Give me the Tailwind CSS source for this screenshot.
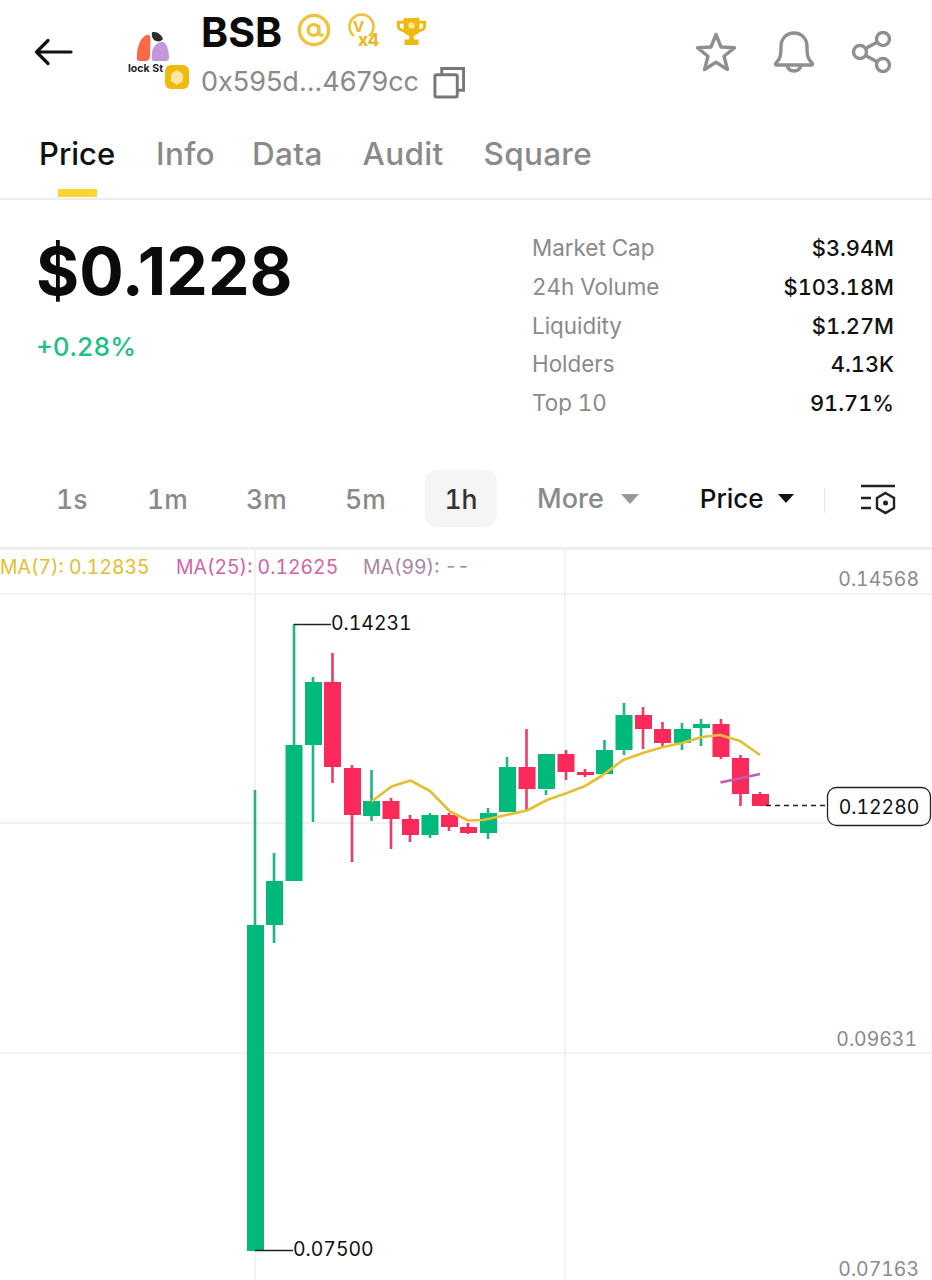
<!DOCTYPE html>
<html lang="en">
<head>
    <meta charset="UTF-8">
    <meta name="viewport" content="width=device-width, initial-scale=1.0">
    <title>BSB Price</title>
    <script src="https://cdn.jsdelivr.net/npm/@tailwindcss/browser@4"></script>
</head>
<body class="bg-white font-['Inter',sans-serif] tabular-nums">
    <div class="w-[932px] h-[1280px] overflow-hidden">

        <!-- Header -->
        <div class="h-[122px] flex items-start">
            <svg class="ml-[34px] mt-[37px] w-[40px] h-[30px]" viewBox="0 0 40 30" fill="none" stroke="#111" stroke-width="3.2" stroke-linecap="round" stroke-linejoin="round">
                <path d="M37 15H3M14 3.5 2.5 15 14 26.5"/>
            </svg>
            <svg class="ml-[52px] mt-[30px] w-[66px] h-[62px]" viewBox="0 0 66 62">
                <path d="M14 12C17 6 22 3 24 6C25 11 24 18 24 24C24 29 23 31 19 31H13C11 31 10.500 29 11 25C11 20 12 16 14 12Z" fill="#fb6a45"/>
                <path d="M26 22C27 17 31 11 37 12C41 13 43 22 43 27C43 30 42 31 38 31H28C26 31 25.500 29 26 22Z" fill="#c497dc"/>
                <path d="M26 2.500C30 1 35 4 37 9C35 12 31 12 28 10C26 8 25.500 5 26 2.500Z" fill="#2c2c2c"/>
                <text x="2" y="42" font-size="10.500" font-weight="700" fill="#222" font-family="Inter">lock St</text>
                <rect x="39" y="35" width="24" height="24" rx="6" fill="#f0b90b"/>
                <path d="M51 40 57 44V51L51 55 45 51V44Z" fill="#fbe6a0"/>
            </svg>
            <div class="ml-[9px] pt-[10px]">
                <div class="flex items-start h-[44px]">
                    <span class="text-[41px] font-bold leading-[44px] text-[#0b0b0b] w-[82px]">BSB</span>
                    <svg class="ml-[14px] mt-[3px] w-[34px] h-[34px]" viewBox="0 0 35 35" fill="none" stroke="#f0c23a" stroke-width="3.4">
                        <circle cx="17.5" cy="17.5" r="15"/>
                        <circle cx="17" cy="17.5" r="5.5"/>
                        <path d="M22.5 12V20C22.5 23 25 23.5 27 22"/>
                    </svg>
                    <svg class="ml-[15px] mt-[3px] w-[36px] h-[38px]" viewBox="0 0 36 38" fill="none">
                        <path d="M23 23A12 12 0 1 0 8 23" stroke="#f0c23a" stroke-width="2.600"/>
                        <text x="7" y="19" font-size="15" font-weight="700" fill="#e9b92c" font-family="Inter">V</text>
                        <text x="12" y="33" font-size="17" font-weight="800" fill="#e9b92c" font-family="Inter">x4</text>
                    </svg>
                    <svg class="ml-[14px] mt-[7px] w-[31px] h-[29px]" viewBox="0 0 33 31">
                        <path d="M8 1H25V4H32V10C32 14 28 16 25 16C23.5 18.5 21 19.5 19 20V24H24V30H9V24H14V20C12 19.5 9.5 18.5 8 16C5 16 1 14 1 10V4H8ZM8 7H4V10C4 12 6 13 8 13ZM25 7V13C27 13 29 12 29 10V7Z" fill="#f0b90b" fill-rule="evenodd"/>
                        <circle cx="16.5" cy="9" r="3.4" fill="#fbe6a0"/>
                    </svg>
                </div>
                <div class="flex items-center mt-[10px]">
                    <span class="text-[27px] leading-[36px] text-[#8a8a8a] normal-nums">0x595d...4679cc</span>
                    <svg class="ml-[14px] w-[33px] h-[33px]" viewBox="0 0 34 34" fill="none" stroke="#777" stroke-width="3">
                        <rect x="2" y="9" width="23" height="23" rx="1.5"/>
                        <path d="M9 9V2.5H31.5V25H25"/>
                    </svg>
                </div>
            </div>
            <div class="ml-auto mr-[39px] mt-[30px] flex items-center gap-[36px]">
                <svg class="w-[42px] h-[42px]" viewBox="0 0 42 42" fill="none" stroke="#8f8f8f" stroke-width="3.4" stroke-linejoin="round">
                    <path d="M21 3.5 26 16 39.5 16.8 29 25.3 32.5 38.5 21 31.2 9.5 38.5 13 25.3 2.5 16.8 16 16Z"/>
                </svg>
                <svg class="w-[42px] h-[44px]" viewBox="0 0 42 44" fill="none" stroke="#8f8f8f" stroke-width="3.4" stroke-linejoin="round">
                    <path d="M3 33C7 29 8 26 8 17C8 8 14 3 21 3C28 3 34 8 34 17C34 26 35 29 39 33C40 34 39.500 35 38 35H4C2.500 35 2 34 3 33Z"/>
                    <path d="M14 35.500C15 39 18 41 21 41C24 41 27 39 28 35.500"/>
                </svg>
                <svg class="w-[42px] h-[42px]" viewBox="0 0 42 42" fill="none" stroke="#8f8f8f" stroke-width="3.4">
                    <circle cx="9" cy="21" r="6.500"/>
                    <circle cx="32" cy="8" r="6.500"/>
                    <circle cx="32" cy="34" r="6.500"/>
                    <path d="M14.500 17.500 26.500 11M14.500 24.500 26.500 31"/>
                </svg>
            </div>
        </div>

        <!-- Tabs -->
        <div class="h-[78px] border-b-2 border-[#ececec] flex pl-[39px] gap-[40px] text-[31.5px] leading-[64px] tracking-[0.3px] text-[#8a8a8a] font-medium">
            <div class="relative w-[77px] text-[31px] tracking-normal text-[#111]">Price
                <div class="absolute left-[19px] top-[67px] w-[39px] h-[8px] bg-[#fcd535]"></div>
            </div>
            <div class="w-[56px]">Info</div>
            <div>Data</div>
            <div>Audit</div>
            <div>Square</div>
        </div>

        <!-- Price and stats -->
        <div class="h-[268px] flex justify-between pl-[36px] pr-[38px]">
            <div>
                <div class="text-[66px] leading-[70px] font-bold text-[#0b0b0b] mt-[36px] normal-nums">$0.1228</div>
                <div class="text-[26px] leading-[32px] font-medium text-[#1fbf8b] mt-[25px]">+0.28%</div>
            </div>
            <div class="w-[362px] mt-[29px] text-[22.4px] leading-[38.8px]">
                <div class="flex justify-between"><span class="text-[#8a8a8a]">Market Cap</span><span class="text-[21.8px] font-medium text-[#111]">$3.94M</span></div>
                <div class="flex justify-between"><span class="text-[#8a8a8a]">24h Volume</span><span class="text-[21.8px] font-medium text-[#111]">$103.18M</span></div>
                <div class="flex justify-between"><span class="text-[#8a8a8a]">Liquidity</span><span class="text-[21.8px] font-medium text-[#111]">$1.27M</span></div>
                <div class="flex justify-between"><span class="text-[#8a8a8a]">Holders</span><span class="text-[21.8px] font-medium text-[#111]">4.13K</span></div>
                <div class="flex justify-between"><span class="text-[#8a8a8a]">Top 10</span><span class="text-[21.8px] font-medium text-[#111]">91.71%</span></div>
            </div>
        </div>

        <!-- Interval bar -->
        <div class="h-[82px] pt-[2px] border-b-[3px] border-[#efefef] flex items-start text-[26.5px] font-medium text-[#8a8a8a]">
            <div class="ml-[56px] w-[91px] leading-[58px]">1s</div>
            <div class="w-[99px] leading-[58px]">1m</div>
            <div class="w-[99px] leading-[58px]">3m</div>
            <div class="w-[80px] leading-[58px]">5m</div>
            <div class="w-[72px] h-[57px] bg-[#f5f5f5] rounded-xl text-center leading-[58px] text-[#333]">1h</div>
            <div class="ml-[40px] text-[27px] leading-[58px]">More</div>
            <div class="ml-[17px] mt-[24px] w-0 h-0 border-x-[9px] border-x-transparent border-t-[10px] border-t-[#999]"></div>
            <div class="ml-[61px] w-[64px] text-[26px] leading-[58px] text-[#111]">Price</div>
            <div class="ml-[14px] mt-[24px] w-0 h-0 border-x-[8px] border-x-transparent border-t-[9px] border-t-[#111]"></div>
            <div class="ml-[30px] mt-[18px] w-[1px] h-[25px] bg-[#e6e6e6]"></div>
            <svg class="ml-[35px] mt-[14px] w-[36px] h-[32px]" viewBox="0 0 36 32" fill="none" stroke="#222" stroke-width="2.400">
                <path d="M1 2H35M1 14H11M1 24H11"/>
                <path d="M25.500 9 34 14V24L25.500 29 17 24V14Z"/>
                <circle cx="25.500" cy="19" r="2.500" fill="#222" stroke="none"/>
            </svg>
        </div>

        <!-- Chart -->
        <svg class="block w-[932px] h-[730px]" viewBox="0 550 932 730" font-family="Inter">
            <g stroke="#eeeeee" stroke-width="1.500">
                <path d="M0 594H932M0 823H932M0 1053H932M255 550V1280M565 550V1280"/>
            </g>
            <g font-size="19.400">
                <text x="0" y="574" fill="#e6bd2c">MA(7): 0.12835</text>
                <text x="176" y="574" fill="#d65fae">MA(25): 0.12625</text>
                <text x="363" y="574" fill="#a685a8">MA(99): --</text>
            </g>
            <g font-size="19.400" fill="#8a8a8a" text-anchor="end">
                <text x="919" y="586">0.14568</text>
                <text x="917" y="1046">0.09631</text>
                <text x="919" y="1276">0.07163</text>
            </g>

            <!-- wicks -->
            <g stroke="#1fb584" stroke-width="2.600">
                <path d="M255 790V925M274 853V943M294 624V745M313 677V822M371.500 770V821M430 813V838M488 808V839M507 757V812M546 790V795M604.500 740V774M624 703V755M682 723V750M701 719V746"/>
            </g>
            <g stroke="#ef3a68" stroke-width="2.600">
                <path d="M332.500 653V783M352 765V862M391 798V849M410 815V842M449 813V831M468 823V834M526.500 729V811M566 750V780M585 769V777M643 707V749M662.500 722V747M721 719V759M740.500 755V806M760 792V806"/>
            </g>
            <!-- bodies -->
            <g fill="#00b97b">
                <rect x="247" y="925" width="17" height="326"/>
                <rect x="266" y="881" width="17" height="44"/>
                <rect x="285.500" y="745" width="17" height="136"/>
                <rect x="305" y="682" width="17" height="63"/>
                <rect x="363" y="801" width="17" height="15"/>
                <rect x="421.500" y="815" width="17" height="20"/>
                <rect x="480" y="813" width="17" height="20"/>
                <rect x="499" y="767" width="17" height="45"/>
                <rect x="538" y="754" width="17" height="35"/>
                <rect x="596" y="750" width="17" height="24"/>
                <rect x="615.500" y="715" width="17" height="35"/>
                <rect x="674" y="729" width="17" height="14"/>
                <rect x="693" y="724" width="17" height="4"/>
            </g>
            <g fill="#fb2a5a">
                <rect x="324" y="682" width="17" height="85"/>
                <rect x="344" y="768" width="17" height="47"/>
                <rect x="382.500" y="801" width="17" height="18"/>
                <rect x="402" y="819" width="17" height="16"/>
                <rect x="441" y="815" width="17" height="12"/>
                <rect x="460" y="827" width="17" height="6"/>
                <rect x="518.500" y="767" width="17" height="22"/>
                <rect x="557.500" y="754" width="17" height="18"/>
                <rect x="577" y="772" width="17" height="3"/>
                <rect x="635" y="715" width="17" height="14"/>
                <rect x="654" y="729" width="17" height="14"/>
                <rect x="712.500" y="724" width="17" height="33"/>
                <rect x="732" y="758" width="17" height="36"/>
                <rect x="752" y="794" width="17" height="12"/>
            </g>

            <!-- moving averages -->
            <path d="M720.500 782.500 760 774" fill="none" stroke="#c05fa8" stroke-width="2.400"/>
            <path d="M371.500 801.500 391.500 786.500 410.500 780.500 430 791 450 811.500 468 820.500 483 820 497 817 527 810.500 547 800 567 793 585 786 603 775 623 760 643 753 663 747 682 743 702 737 720 735 740 741 760 755" fill="none" stroke="#e3c033" stroke-width="2.700" stroke-linejoin="round"/>

            <!-- high / low / last price -->
            <g stroke="#222" stroke-width="1.300" fill="none">
                <path d="M294 624.500H331M255 1250.500H293"/>
                <path d="M766 805.500H826" stroke-dasharray="5 4"/>
            </g>
            <g font-size="19.400" fill="#111">
                <text x="331" y="630">0.14231</text>
                <text x="293" y="1256">0.07500</text>
            </g>
            <rect x="827.500" y="787.500" width="103" height="38" rx="9" fill="#fff" stroke="#222" stroke-width="1.300"/>
            <text x="879" y="814" font-size="19.400" fill="#111" text-anchor="middle">0.12280</text>
        </svg>
    </div>
</body>
</html>
